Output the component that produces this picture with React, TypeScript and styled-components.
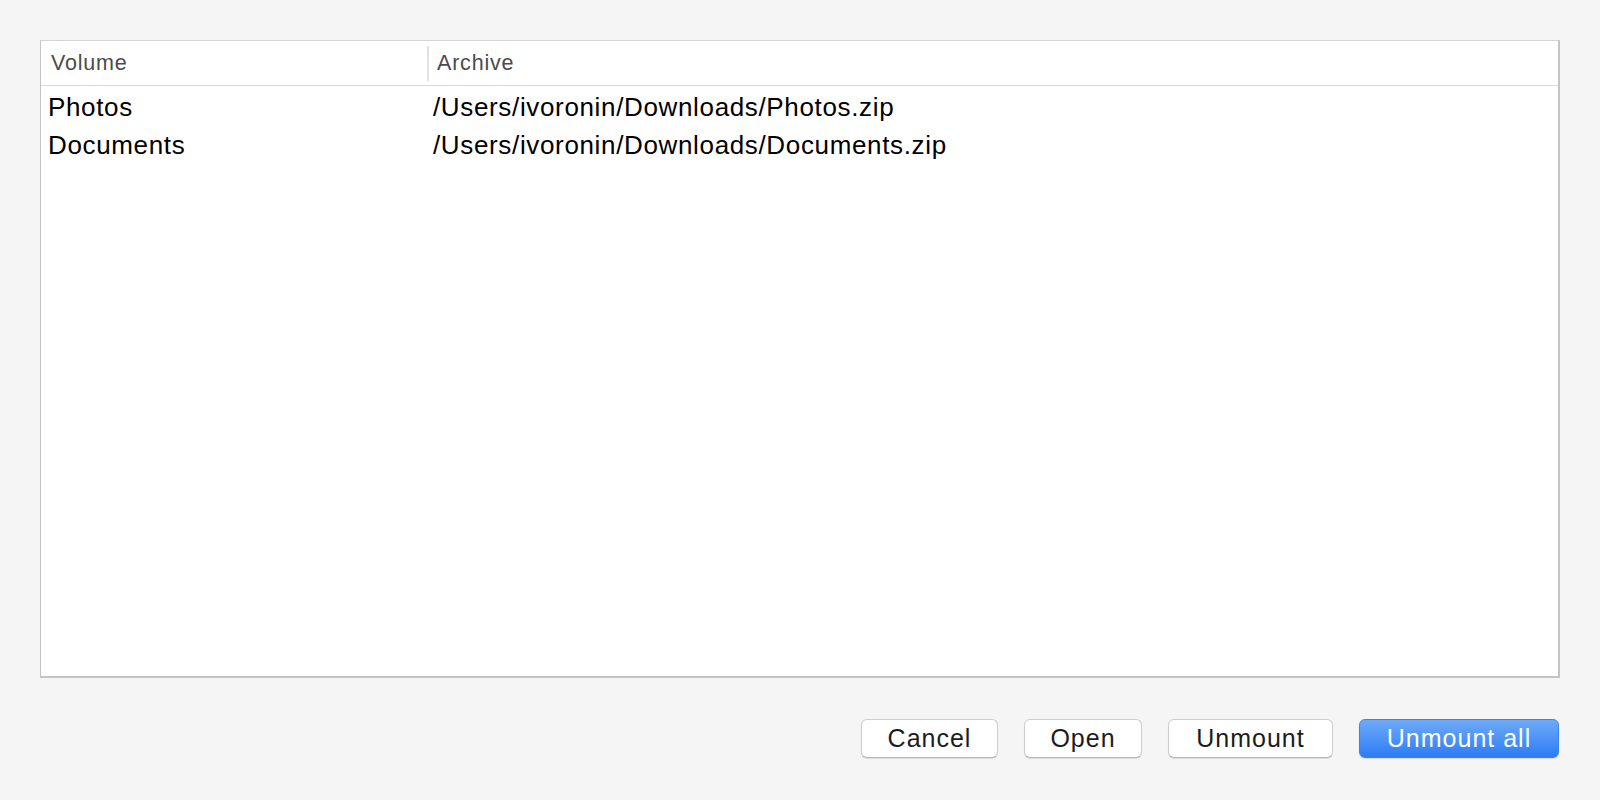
import React from "react";
import styled, { createGlobalStyle } from "styled-components";

const Global = createGlobalStyle`
  html, body { margin: 0; padding: 0; background: #f5f5f5; }
  body { font-family: "Liberation Sans", Arial, sans-serif; }
`;

const Window = styled.div`
  width: 1600px;
  height: 800px;
  box-sizing: border-box;
  padding: 40px 40px 0 40px;
  display: flex;
  flex-direction: column;
  background: #f5f5f5;
`;

const Table = styled.div`
  height: 638px;
  box-sizing: border-box;
  background: #ffffff;
  border: 1px solid #c4c4c4;
  border-top-color: #d4d4d4;
  border-right-width: 2px;
  border-bottom-width: 2px;
  display: flex;
  flex-direction: column;
`;

const Header = styled.div`
  height: 45px;
  box-sizing: border-box;
  padding-top: 1px;
  border-bottom: 1px solid #d8d8d8;
  display: grid;
  grid-template-columns: 386px 1fr;
  align-items: center;
`;

const HeaderCell = styled.div<{ $divider?: boolean }>`
  height: 35px;
  display: flex;
  align-items: center;
  box-sizing: border-box;
  padding-left: ${(p) => (p.$divider ? "8px" : "10px")};
  border-left: ${(p) => (p.$divider ? "2px solid #e2e2e2" : "none")};
  font-size: 21.5px;
  letter-spacing: 0.8px;
  color: #4b4b4b;
`;

const Body = styled.div`
  padding-top: 2px;
  display: flex;
  flex-direction: column;
`;

const Row = styled.div`
  height: 38px;
  display: grid;
  grid-template-columns: 386px 1fr;
  align-items: center;
`;

const Cell = styled.div<{ $second?: boolean }>`
  padding-left: ${(p) => (p.$second ? "6px" : "7px")};
  font-size: 26px;
  letter-spacing: 0.65px;
  color: #000;
  white-space: nowrap;
`;

const Buttons = styled.div`
  margin-top: 41px;
  display: flex;
  justify-content: flex-end;
  gap: 26px;
  padding-right: 1px;
`;

const Button = styled.button<{ $w: number; $primary?: boolean }>`
  width: ${(p) => p.$w}px;
  height: 39px;
  box-sizing: border-box;
  border-radius: 6px;
  font-family: "Liberation Sans", Arial, sans-serif;
  font-size: 25px;
  letter-spacing: 1px;
  padding: 0;
  display: flex;
  align-items: center;
  justify-content: center;
  cursor: default;
  ${(p) =>
    p.$primary
      ? `
    color: #ffffff;
    border: 1px solid #3c83f2;
    background: linear-gradient(to bottom, #6eaaf8, #2d7cf6);
    box-shadow: 0 1px 1px rgba(0,0,0,0.12);
  `
      : `
    color: #1c1c1c;
    border: 1px solid #cdcdcd;
    border-bottom-color: #b5b5b5;
    background: #ffffff;
    box-shadow: 0 1px 1px rgba(0,0,0,0.1);
  `}
`;

const rows = [
  { volume: "Photos", archive: "/Users/ivoronin/Downloads/Photos.zip" },
  { volume: "Documents", archive: "/Users/ivoronin/Downloads/Documents.zip" },
];

export default function App() {
  return (
    <>
      <Global />
      <Window>
        <Table>
          <Header>
            <HeaderCell>Volume</HeaderCell>
            <HeaderCell $divider>Archive</HeaderCell>
          </Header>
          <Body>
            {rows.map((r) => (
              <Row key={r.volume}>
                <Cell>{r.volume}</Cell>
                <Cell $second>{r.archive}</Cell>
              </Row>
            ))}
          </Body>
        </Table>
        <Buttons>
          <Button $w={137}>Cancel</Button>
          <Button $w={118}>Open</Button>
          <Button $w={165}>Unmount</Button>
          <Button $w={200} $primary>
            Unmount all
          </Button>
        </Buttons>
      </Window>
    </>
  );
}
